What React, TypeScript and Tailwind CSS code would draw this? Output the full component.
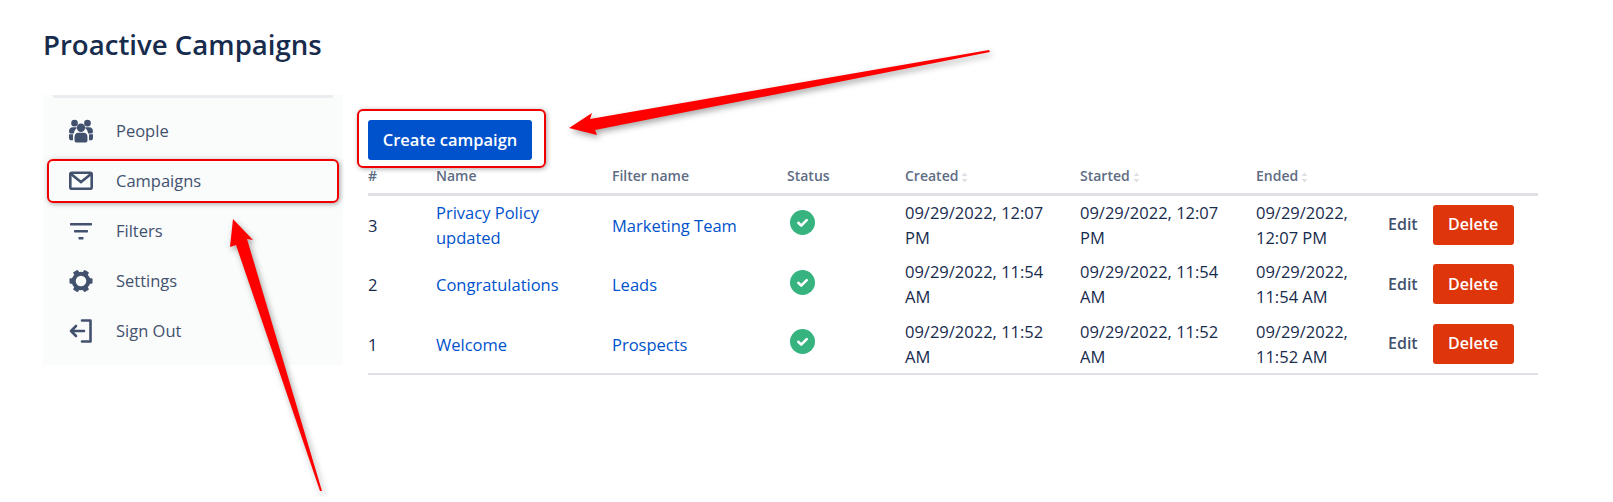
const campaigns = [
  { id: 3, name: "Privacy Policy updated", filter: "Marketing Team", date: "09/29/2022, 12:07 PM" },
  { id: 2, name: "Congratulations", filter: "Leads", date: "09/29/2022, 11:54 AM" },
  { id: 1, name: "Welcome", filter: "Prospects", date: "09/29/2022, 11:52 AM" },
];

function UsersIcon() {
  return (
    <svg width="26" height="26" viewBox="0 0 26 26" fill="#42526e">
      <circle cx="6" cy="4.500" r="3.600" />
      <circle cx="20" cy="4.500" r="3.600" />
      <path d="M0 13.500C0 10.500 2 9 4 9h3.500c.6 0 1 .2 1.300.5C6.800 11 5.500 13 5.300 15.800H2.500C1 15.800 0 15 0 13.500z" />
      <path d="M26 13.500C26 10.500 24 9 22 9h-3.500c-.6 0-1 .2-1.300.5 2 1.500 3.300 3.500 3.500 6.300h2.800c1.500 0 2.500-.8 2.500-2.300z" />
      <circle cx="13" cy="9.500" r="4.500" />
      <path d="M6 19.500C6 16.500 8 15 10 15h6c2 0 4 1.500 4 4.500v3.500c0 1.500-1 2.500-2.500 2.500h-9C7 25.500 6 24.500 6 23z" />
      <path d="M0 16.500h4.300v6.500H2.500C1 23 0 22 0 20.500zM26 16.500h-4.300v6.500h1.800c1.500 0 2.500-1 2.500-2.500z" />
    </svg>
  );
}

function MailIcon() {
  return (
    <svg width="24" height="20" viewBox="0 0 24 20" fill="none" stroke="#42526e" strokeWidth="2.600">
      <rect x="1.300" y="1.800" width="21.400" height="16" rx="1.500" />
      <path d="M2 3l10 8 10-8" />
    </svg>
  );
}

function FilterIcon() {
  return (
    <svg width="24" height="20" viewBox="0 0 24 20" fill="#42526e">
      <rect x="1" y="2" width="22" height="2.400" rx="0.600" />
      <rect x="5" y="9" width="14" height="2.400" rx="0.600" />
      <rect x="9.500" y="16" width="5" height="2.400" rx="0.600" />
    </svg>
  );
}

function GearIcon() {
  return (
    <svg width="24" height="24" viewBox="0 0 24 24" fill="#42526e">
      <circle cx="12" cy="12" r="7.300" fill="none" stroke="#42526e" strokeWidth="4" />
      {[0, 60, 120, 180, 240, 300].map((a) => (
        <rect key={a} x="9.200" y="0.500" width="5.600" height="5" rx="1" transform={`rotate(${a + 30} 12 12)`} />
      ))}
    </svg>
  );
}

function SignOutIcon() {
  return (
    <svg width="24" height="24" viewBox="0 0 24 24" fill="none" stroke="#42526e" strokeWidth="2.600" strokeLinecap="round" strokeLinejoin="round">
      <path d="M13 1.500h8.500v21H13" />
      <path d="M15 12H2M7 7l-5 5 5 5" />
    </svg>
  );
}

function CheckIcon() {
  return (
    <svg width="25" height="25" viewBox="0 0 25 25" className="ml-[3px] -translate-y-[2px]">
      <circle cx="12.500" cy="12.500" r="12.500" fill="#36b37e" />
      <path d="M8.300 12.800l2.900 2.800 5.500-5.500" fill="none" stroke="#fff" strokeWidth="2.600" strokeLinecap="round" strokeLinejoin="round" />
    </svg>
  );
}

function SortIcon() {
  return (
    <svg width="7" height="11" viewBox="0 0 7 11" fill="#dfe1e6" className="ml-[3px] inline-block">
      <path d="M3.500 0.500L6.500 4H0.500z" />
      <path d="M3.500 10.500L0.500 7h6z" />
    </svg>
  );
}

function NavItem({ icon, label, boxed }: { icon: React.ReactNode; label: string; boxed?: boolean }) {
  return (
    <div className="relative flex h-[50px] items-center pl-[26px] text-[#42526e]">
      <span className="flex w-6 items-center justify-center">{icon}</span>
      <span className="ml-[23px]">{label}</span>
      {boxed && (
        <span className="absolute inset-x-[4px] inset-y-[3px] rounded-md border-2 border-[#f00000] shadow-[1px_1px_5px_rgba(0,0,0,0.35)]" />
      )}
    </div>
  );
}

export default function App() {
  return (
    <div className="relative h-[502px] w-[1613px] overflow-hidden bg-white pl-[43px] font-['Open_Sans',sans-serif] text-[16.5px] text-[#172b4d]">
      <h1 className="flex h-[95px] items-center pb-[5px] text-[27.6px] font-semibold text-[#172b4d]">
        Proactive Campaigns
      </h1>
      <div className="flex">
        <nav className="h-[270px] w-[300px] bg-[#fafbfb]">
          <div className="mx-[10px] h-[3px] bg-[#ebecf0]" />
          <div className="pt-[8px]">
            <NavItem icon={<UsersIcon />} label="People" />
            <NavItem icon={<MailIcon />} label="Campaigns" boxed />
            <NavItem icon={<FilterIcon />} label="Filters" />
            <NavItem icon={<GearIcon />} label="Settings" />
            <NavItem icon={<SignOutIcon />} label="Sign Out" />
          </div>
        </nav>
        <main className="ml-[25px] w-[1170px] pt-[25px]">
          <div className="relative w-[164px]">
            <button className="h-10 w-full rounded-[3px] bg-[#0052cc] font-semibold text-white">
              Create campaign
            </button>
            <span className="absolute -top-[11px] -right-[14px] -bottom-[8px] -left-[11px] rounded-md border-2 border-[#f00000] shadow-[1px_1px_5px_rgba(0,0,0,0.35)]" />
          </div>
          <table className="w-full table-fixed border-collapse text-left">
            <colgroup>
              <col className="w-[68px]" />
              <col className="w-[176px]" />
              <col className="w-[175px]" />
              <col className="w-[118px]" />
              <col className="w-[175px]" />
              <col className="w-[176px]" />
              <col className="w-[132px]" />
              <col className="w-[150px]" />
            </colgroup>
            <thead className="border-b-[3px] border-[#dfe1e6] text-[14px] text-[#5e6c84]">
              <tr className="h-[34px]">
                <th className="pb-[2px] font-semibold">#</th>
                <th className="pb-[2px] font-semibold">Name</th>
                <th className="pb-[2px] font-semibold">Filter name</th>
                <th className="pb-[2px] font-semibold">Status</th>
                <th className="pb-[2px] font-semibold">Created<SortIcon /></th>
                <th className="pb-[2px] font-semibold">Started<SortIcon /></th>
                <th className="pb-[2px] font-semibold">Ended<SortIcon /></th>
                <th />
              </tr>
            </thead>
            <tbody className="border-b-2 border-[#dfe1e6] leading-[25px]">
              {campaigns.map((c) => (
                <tr key={c.id} className="h-[60px]">
                  <td className="pt-[1px]">{c.id}</td>
                  <td className="pt-[1px] pr-5 text-[#0052cc]">{c.name}</td>
                  <td className="pt-[1px] pr-2 text-[#0052cc]">{c.filter}</td>
                  <td><CheckIcon /></td>
                  <td className="pr-5">{c.date}</td>
                  <td className="pr-5">{c.date}</td>
                  <td className="pr-2">{c.date}</td>
                  <td>
                    <div className="flex items-center">
                      <span className="font-semibold text-[16px] text-[#42526e]">Edit</span>
                      <button className="ml-[15px] h-10 w-[81px] rounded-[3px] bg-[#de350b] font-semibold text-[16px] text-white">
                        Delete
                      </button>
                    </div>
                  </td>
                </tr>
              ))}
            </tbody>
          </table>
        </main>
      </div>
      <svg
        width="1613"
        height="502"
        viewBox="0 0 1613 502"
        className="pointer-events-none absolute top-0 left-0 drop-shadow-[2px_3px_3px_rgba(0,0,0,0.35)]"
      >
        <path d="M989 50L990 52L595 130L597 135L569 128L592 113L590 119Z" fill="#ff0000" />
        <path d="M322 491L320 491L236 245L230 247L233 219L253 240L247 239Z" fill="#ff0000" />
      </svg>
    </div>
  );
}
